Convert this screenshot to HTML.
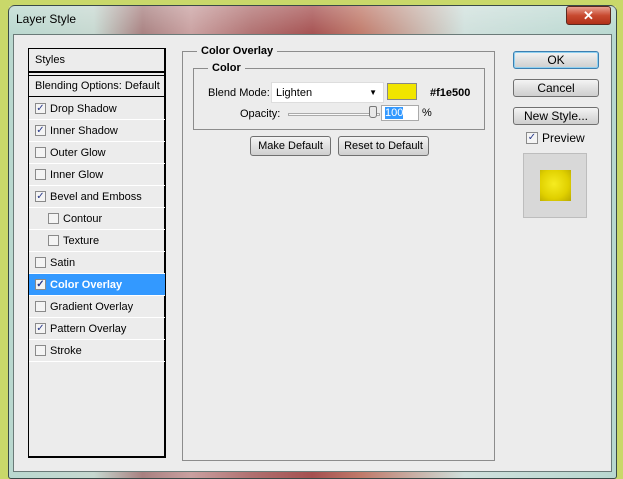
<!DOCTYPE html>
<html><head><style>
*{margin:0;padding:0;box-sizing:border-box}
body{width:623px;height:479px;overflow:hidden;background:#c9d86a;font-family:"Liberation Sans",sans-serif;font-size:11px;color:#000;position:relative}
.frame{position:absolute;left:8px;top:5px;width:609px;height:474px;border:1px solid #3a4a48;border-radius:7px 7px 3px 3px;
background:linear-gradient(90deg,#b9d8cf 0%,#c6d8d0 14%,#a88080 22%,#c9a0a0 30%,#b07070 40%,#a55050 50%,#c07a6a 58%,#cfe0dc 75%,#b8d8d0 100%)}
.frame:after{content:"";position:absolute;left:0;right:0;top:0;height:30px;background:linear-gradient(rgba(255,255,255,.25),rgba(255,255,255,0))}
.title{position:absolute;left:16px;top:12px;font-size:12px;color:#000;z-index:2}
.close{position:absolute;left:566px;top:6px;width:45px;height:19px;border:1px solid #5a2a20;border-radius:3px;background:linear-gradient(#e8a090,#c84a30 50%,#b03018);color:#fff;font-weight:bold;font-size:13px;text-align:center;line-height:17px;z-index:2}
.content{position:absolute;left:13px;top:34px;width:599px;height:438px;background:#ececec;border:1px solid #6a7a78;z-index:3}
.abs{position:absolute}
.left{left:14px;top:13px;width:138px;height:410px;border:2px solid #000;border-width:1px 2px 2px 1px;background:#ececec}
.row{position:absolute;left:0;width:136px;height:22px;border-bottom:1px solid #fff;padding-left:6px;display:flex;align-items:center}
.cb{display:inline-flex;align-items:center;justify-content:center;width:11px;height:11px;border:1px solid #8a8a8a;background:#f4f4f4;margin-right:4px;font-size:10px;line-height:1;color:#2a3a8a;flex:none}
.sel{background:#3399ff;color:#fff;font-weight:bold}
.grp{border:1px solid #8c8c8c}
.leg{position:absolute;background:#ececec;font-weight:bold;padding:0 4px}
.btn{position:absolute;border:1px solid #707070;border-radius:3px;background:linear-gradient(#f4f4f4,#e0e0e0 50%,#cfcfcf);text-align:center;font-size:12px}
</style></head><body>
<div class="frame"></div>
<div class="title">Layer Style</div>
<div class="close">✕</div>
<div class="content">
 <div class="abs left">
  <div class="row" style="top:0;height:24px;border-bottom:2px solid #000">Styles</div>
  <div class="row" style="top:26px;border-top:1px solid #000;height:22px;border-bottom:1px solid #000">Blending Options: Default</div>
  <div class="row" style="top:49px"><span class="cb">✓</span>Drop Shadow</div>
  <div class="row" style="top:71px"><span class="cb">✓</span>Inner Shadow</div>
  <div class="row" style="top:93px"><span class="cb"></span>Outer Glow</div>
  <div class="row" style="top:115px"><span class="cb"></span>Inner Glow</div>
  <div class="row" style="top:137px"><span class="cb">✓</span>Bevel and Emboss</div>
  <div class="row" style="top:159px;padding-left:19px"><span class="cb"></span>Contour</div>
  <div class="row" style="top:181px;padding-left:19px"><span class="cb"></span>Texture</div>
  <div class="row" style="top:203px"><span class="cb"></span>Satin</div>
  <div class="row sel" style="top:225px"><span class="cb">✓</span>Color Overlay</div>
  <div class="row" style="top:247px"><span class="cb"></span>Gradient Overlay</div>
  <div class="row" style="top:269px"><span class="cb">✓</span>Pattern Overlay</div>
  <div class="row" style="top:291px"><span class="cb"></span>Stroke</div>
 </div>
 <div class="abs grp" style="left:168px;top:16px;width:313px;height:410px"></div>
 <div class="leg" style="left:183px;top:10px">Color Overlay</div>
 <div class="abs grp" style="left:179px;top:33px;width:292px;height:62px"></div>
 <div class="leg" style="left:194px;top:27px">Color</div>
 <div class="abs" style="left:194px;top:52px">Blend Mode:</div>
 <div class="abs" style="left:257px;top:47px;width:113px;height:21px;background:#fff;border:1px solid #ddd;line-height:20px;padding-left:4px">Lighten<span style="position:absolute;right:6px;top:0;font-size:8px">▼</span></div>
 <div class="abs" style="left:373px;top:48px;width:30px;height:17px;background:#f1e500;border:1px solid #888"></div>
 <div class="abs" style="left:416px;top:52px;font-weight:bold">#f1e500</div>
 <div class="abs" style="left:226px;top:73px">Opacity:</div>
 <div class="abs" style="left:274px;top:78px;width:92px;height:3px;border:1px solid #aaa;background:#f8f8f8"></div>
 <div class="abs" style="left:355px;top:71px;width:8px;height:12px;border:1px solid #777;border-radius:2px 2px 3px 3px;background:#e8e8e8"></div>
 <div class="abs" style="left:367px;top:70px;width:38px;height:16px;background:#fff;border:1px solid #aaa;padding-left:3px;line-height:14px"><span style="background:#3399ff;color:#fff">100</span></div>
 <div class="abs" style="left:408px;top:72px">%</div>
 <div class="btn" style="left:236px;top:101px;width:81px;height:20px;line-height:18px;font-size:11px">Make Default</div>
 <div class="btn" style="left:324px;top:101px;width:91px;height:20px;line-height:18px;font-size:11px">Reset to Default</div>
 <div class="btn" style="left:499px;top:16px;width:86px;height:18px;line-height:16px;border-color:#3c7fb1;box-shadow:inset 0 0 0 1px #8fd0f0">OK</div>
 <div class="btn" style="left:499px;top:44px;width:86px;height:18px;line-height:16px">Cancel</div>
 <div class="btn" style="left:499px;top:72px;width:86px;height:18px;line-height:16px">New Style...</div>
 <div class="abs" style="left:512px;top:96px;font-size:12px;display:flex;align-items:center"><span class="cb" style="width:12px;height:12px">✓</span>Preview</div>
 <div class="abs" style="left:509px;top:118px;width:64px;height:65px;background:#d8d8d8;border:1px solid #bdbdbd"></div>
 <div class="abs" style="left:526px;top:135px;width:31px;height:31px;background:radial-gradient(circle at 45% 45%,#f6ec20,#e0d000 60%,#b8a800)"></div>
</div>
</body></html>
